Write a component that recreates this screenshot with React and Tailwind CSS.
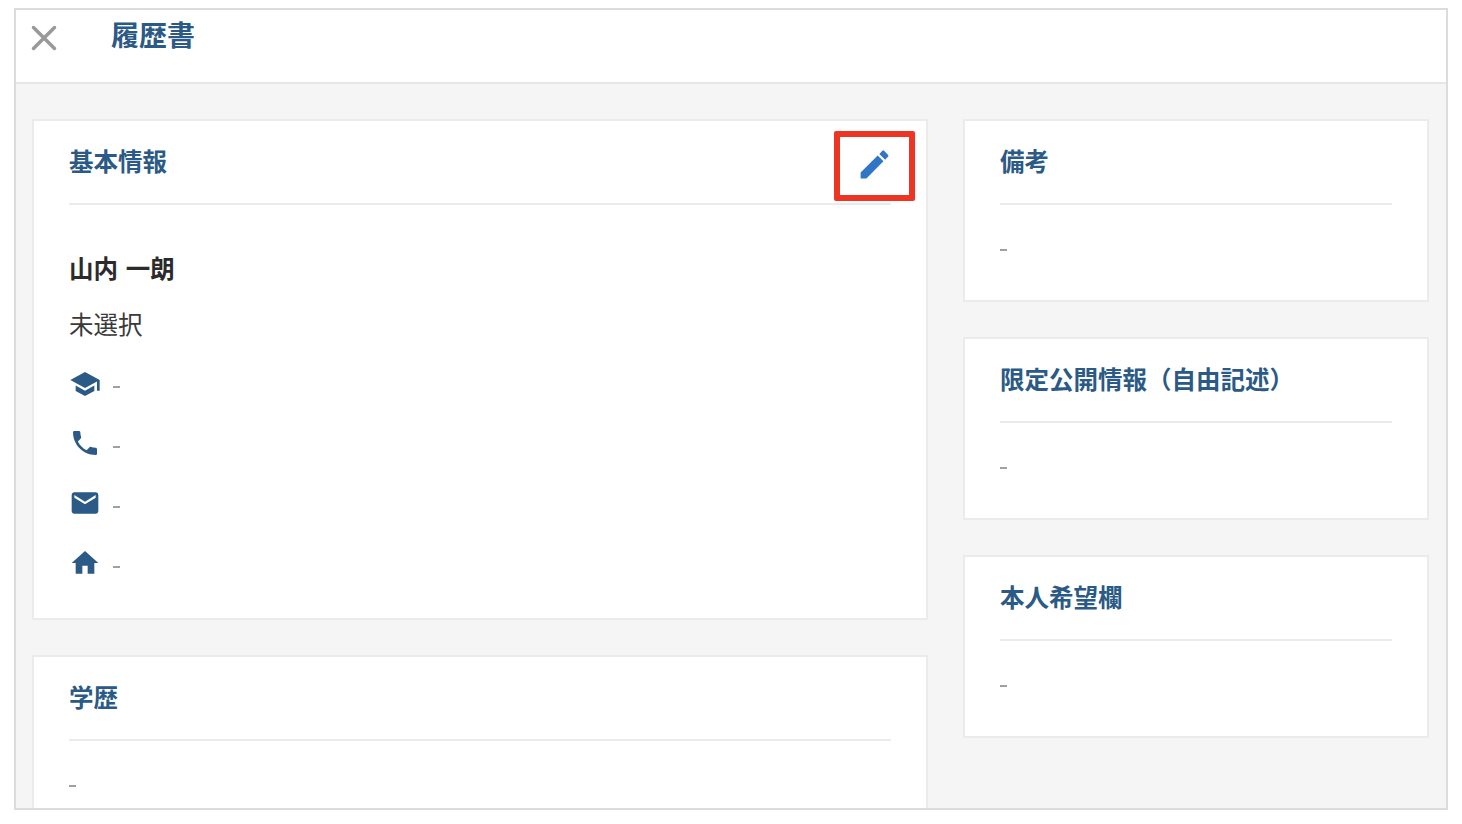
import React from "react";
import { X } from "lucide-react";

const FONT = "font-['Liberation_Sans','Noto_Sans_CJK_JP',sans-serif]";

const Dash = ({ className = "" }) => (
  <div className={`w-[7px] h-[2px] bg-[#a0a0a0] ${className}`}></div>
);

const SchoolIcon = () => (
  <svg viewBox="0 0 24 24" className="w-[32px] h-[32px] -mt-[2px] fill-[#2a5a85]">
    <path d="M5 13.18v4L12 21l7-3.82v-4L12 17l-7-3.82zM12 3 1 9l11 6 9-4.91V17h2V9L12 3z" />
  </svg>
);

const PhoneIcon = () => (
  <svg viewBox="0 0 24 24" className="w-[32px] h-[32px] -mt-[4px] fill-[#2a5a85]">
    <path d="M6.62 10.79c1.44 2.83 3.76 5.14 6.59 6.59l2.2-2.2c.27-.27.67-.36 1.02-.24 1.12.37 2.33.57 3.57.57.55 0 1 .45 1 1V20c0 .55-.45 1-1 1-9.39 0-17-7.61-17-17 0-.55.45-1 1-1h3.5c.55 0 1 .45 1 1 0 1.25.2 2.45.57 3.57.11.35.03.74-.25 1.02l-2.2 2.2z" />
  </svg>
);

const MailIcon = () => (
  <svg viewBox="0 0 24 24" className="w-[32px] h-[32px] -mt-[4px] fill-[#2a5a85]">
    <path d="M20 4H4c-1.1 0-1.99.9-1.99 2L2 18c0 1.1.9 2 2 2h16c1.1 0 2-.9 2-2V6c0-1.1-.9-2-2-2zm0 4-8 5-8-5V6l8 5 8-5v2z" />
  </svg>
);

const HomeIcon = () => (
  <svg viewBox="0 0 24 24" className="w-[32px] h-[32px] -mt-[4px] fill-[#2a5a85]">
    <path d="M10 20v-6h4v6h5v-8h3L12 3 2 12h3v8z" />
  </svg>
);

const contacts = [
  { id: "school", icon: <SchoolIcon /> },
  { id: "phone", icon: <PhoneIcon /> },
  { id: "mail", icon: <MailIcon /> },
  { id: "home", icon: <HomeIcon /> },
];

const CardTitle = ({ children }) => (
  <div className="h-[84px] pt-[24px] border-b-2 border-[#ebebeb]">
    <h2 className="text-[24.5px] leading-[36px] font-bold text-[#2a5a85]">{children}</h2>
  </div>
);

const SideCard = ({ title }) => (
  <section className="h-[183px] bg-white border-2 border-[#ebebeb] pl-[35px] pr-[35px]">
    <CardTitle>{title}</CardTitle>
    <Dash className="mt-[44px]" />
  </section>
);

export default function App() {
  return (
    <div className={`${FONT} w-[1462px] h-[824px] bg-white pt-[8px] pl-[14px] overflow-hidden`}>
      <div className="w-[1434px] h-[802px] border-2 border-[#dcdcdc] bg-[#f5f5f5] flex flex-col overflow-hidden">
        {/* header */}
        <header className="h-[74px] shrink-0 bg-white border-b-2 border-[#e6e6e6] flex items-start">
          <X className="w-[42px] h-[42px] ml-[7px] mt-[7px] text-[#999999]" strokeWidth={2} />
          <h1 className="ml-[46px] mt-[9px] text-[28px] leading-[36px] font-bold text-[#2a5a85]">履歴書</h1>
        </header>

        <div className="flex-1 flex items-start pl-[16px] pt-[35px] gap-[35px] overflow-hidden">
          {/* left column */}
          <div className="w-[896px] shrink-0 flex flex-col gap-[35px]">
            <section className="relative h-[501px] bg-white border-2 border-[#ebebeb] px-[35px]">
              <CardTitle>基本情報</CardTitle>
              <div className="absolute right-[11px] top-[10px] w-[81px] h-[70px] border-[6px] border-[#ee3524] rounded-[2px] flex items-center justify-center">
                <svg viewBox="0 0 24 24" className="w-[37px] h-[37px] -mt-[3px] fill-[#3176c6]">
                  <path d="M3 17.25V21h3.75L17.81 9.94l-3.75-3.75L3 17.25zM20.71 7.04c.39-.39.39-1.02 0-1.41l-2.34-2.34c-.39-.39-1.02-.39-1.41 0l-1.83 1.83 3.75 3.75 1.83-1.83z" />
                </svg>
              </div>
              <p className="mt-[47px] text-[24.5px] leading-[36px] font-bold text-[#2b2b2b] [word-spacing:1px]">山内 一朗</p>
              <p className="mt-[20px] text-[24.5px] leading-[36px] text-[#3a3a3a]">未選択</p>
              <ul className="mt-[24px] flex flex-col gap-[26px]">
                {contacts.map((c) => (
                  <li key={c.id} className="flex items-center h-[34px]">
                    {c.icon}
                    <Dash className="ml-[12px] mt-[4px]" />
                  </li>
                ))}
              </ul>
            </section>

            <section className="h-[300px] bg-white border-2 border-[#ebebeb] px-[35px]">
              <CardTitle>学歴</CardTitle>
              <Dash className="mt-[44px]" />
            </section>
          </div>

          {/* right column */}
          <div className="w-[466px] shrink-0 flex flex-col gap-[35px]">
            <SideCard title="備考" />
            <SideCard title="限定公開情報（自由記述）" />
            <SideCard title="本人希望欄" />
          </div>
        </div>
      </div>
    </div>
  );
}
